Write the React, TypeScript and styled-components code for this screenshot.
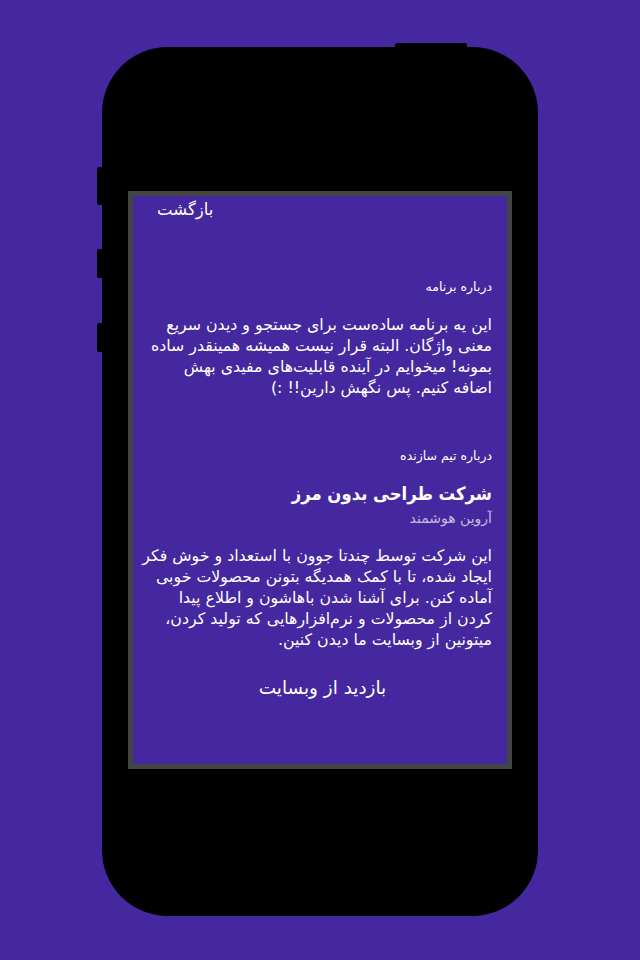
import React from "react";
import styled, { createGlobalStyle } from "styled-components";

const GlobalStyle = createGlobalStyle`
  html, body {
    margin: 0;
    padding: 0;
    background: #4527a0;
  }
  body {
    font-family: "DejaVu Sans", "Noto Sans", sans-serif;
  }
`;

const Page = styled.div`
  width: 640px;
  min-height: 960px;
  padding-top: 47px;
  box-sizing: border-box;
  display: flex;
  justify-content: center;
  align-items: flex-start;
`;

const Phone = styled.div`
  position: relative;
  width: 436px;
  height: 869px;
  background: #000;
  border-radius: 66px;
  padding: 144px 26px 0 26px;
  box-sizing: border-box;
  display: flex;
  justify-content: center;
  align-items: flex-start;
`;

const SideButton = styled.div<{ $top: number; $h: number }>`
  position: absolute;
  left: -5px;
  top: ${(p) => p.$top}px;
  width: 6px;
  height: ${(p) => p.$h}px;
  background: #000;
  border-radius: 2px 0 0 2px;
`;

const TopButton = styled.div`
  position: absolute;
  top: -4px;
  left: 293px;
  width: 72px;
  height: 6px;
  background: #000;
  border-radius: 2px 2px 0 0;
`;

const Screen = styled.div`
  width: 384px;
  height: 578px;
  border: 5px solid #444;
  box-sizing: border-box;
  background: #4527a0;
  direction: rtl;
  color: #fff;
  padding: 0 15px 0 6px;
  display: flex;
  flex-direction: column;
`;

const Header = styled.div`
  display: flex;
  justify-content: flex-end;
  padding-left: 18px;
`;

const BackLink = styled.span`
  font-size: 16.5px;
  line-height: 28px;
  cursor: pointer;
`;

const Section = styled.section<{ $mt: number }>`
  display: flex;
  flex-direction: column;
  margin-top: ${(p) => p.$mt}px;
`;

const Label = styled.div`
  font-size: 12.5px;
  line-height: 20px;
`;

const Paragraph = styled.p`
  font-size: 15.8px;
  line-height: 21px;
  margin: 17px 0 0 0;
  white-space: nowrap;
`;

const TeamHead = styled.div`
  display: flex;
  flex-direction: column;
  gap: 1px;
  margin-top: 15px;
`;

const Title = styled.h2`
  font-size: 18.3px;
  font-weight: bold;
  font-stretch: condensed;
  font-family: "DejaVu Sans Condensed", "DejaVu Sans", sans-serif;
  line-height: 26px;
  margin: 0;
`;

const Name = styled.div`
  font-size: 14px;
  line-height: 20px;
  color: #c4bcd9;
`;

const Visit = styled.div`
  text-align: center;
  font-size: 18.4px;
  line-height: 28px;
  margin-top: 24px;
  padding-left: 14px;
  cursor: pointer;
`;

export default function App() {
  return (
    <>
      <GlobalStyle />
      <Page>
        <Phone>
          <TopButton />
          <SideButton $top={120} $h={38} />
          <SideButton $top={202} $h={29} />
          <SideButton $top={276} $h={29} />
          <Screen>
            <Header>
              <BackLink>بازگشت</BackLink>
            </Header>
            <Section $mt={53}>
              <Label>درباره برنامه</Label>
              <Paragraph>
                این یه برنامه ساده‌ست برای جستجو و دیدن سریع
                <br />
                معنی واژگان. البته قرار نیست همیشه همینقدر ساده
                <br />
                بمونه! میخوایم در آینده قابلیت‌های مفیدی بهش
                <br />
                اضافه کنیم. پس نگهش دارین!! :)
              </Paragraph>
            </Section>
            <Section $mt={48}>
              <Label>درباره تیم سازنده</Label>
              <TeamHead>
                <Title>شرکت طراحی بدون مرز</Title>
                <Name>آروین هوشمند</Name>
              </TeamHead>
              <Paragraph>
                این شرکت توسط چندتا جوون با استعداد و خوش فکر
                <br />
                ایجاد شده، تا با کمک همدیگه بتونن محصولات خوبی
                <br />
                آماده کنن. برای آشنا شدن باهاشون و اطلاع پیدا
                <br />
                کردن از محصولات و نرم‌افزارهایی که تولید کردن،
                <br />
                میتونین از وبسایت ما دیدن کنین.
              </Paragraph>
            </Section>
            <Visit>بازدید از وبسایت</Visit>
          </Screen>
        </Phone>
      </Page>
    </>
  );
}
